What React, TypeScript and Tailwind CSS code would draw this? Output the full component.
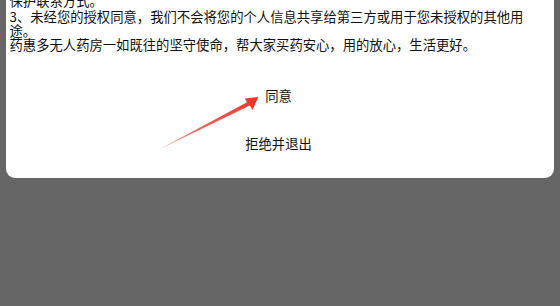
import React from "react";

export default function App() {
  return (
    <div
      className="relative w-[560px] h-[306px] overflow-hidden bg-[#666666]"
      style={{ fontFamily: '"Noto Sans CJK SC", "Noto Sans", sans-serif' }}
    >
      <div className="ml-[6px] w-[548px] rounded-b-[9px] bg-white">
        <div className="mt-[-6.5px] pl-[3.5px] w-[534px] text-[13.33px] leading-[14px] text-[#111111]">
          <p className="mb-[2.5px]">保护联系方式。</p>
          <p>
            3、未经您的授权同意，我们不会将您的个人信息共享给第三方或用于您未授权的其他用途。
          </p>
          <p>药惠多无人药房一如既往的坚守使命，帮大家买药安心，用的放心，生活更好。</p>
        </div>
        <div className="mt-[19.5px] flex flex-col items-center pr-[3px] pb-[10px] text-[13.33px] text-[#111111]">
          <div className="h-[48px] flex items-center">同意</div>
          <div className="h-[48px] flex items-center">拒绝并退出</div>
        </div>
      </div>
      <svg
        className="absolute left-0 top-0 pointer-events-none"
        width="560"
        height="306"
        viewBox="0 0 560 306"
      >
        <defs>
          <linearGradient id="ag" x1="157" y1="150" x2="258" y2="97" gradientUnits="userSpaceOnUse">
            <stop offset="0" stopColor="#f7b0ac" />
            <stop offset="0.35" stopColor="#f06a60" />
            <stop offset="1" stopColor="#ec3328" />
          </linearGradient>
        </defs>
        <polygon
          points="157,150.6 247,102.3 244.8,98.6 258.3,97 252.6,110 249.8,105.6"
          fill="url(#ag)"
        />
      </svg>
    </div>
  );
}
